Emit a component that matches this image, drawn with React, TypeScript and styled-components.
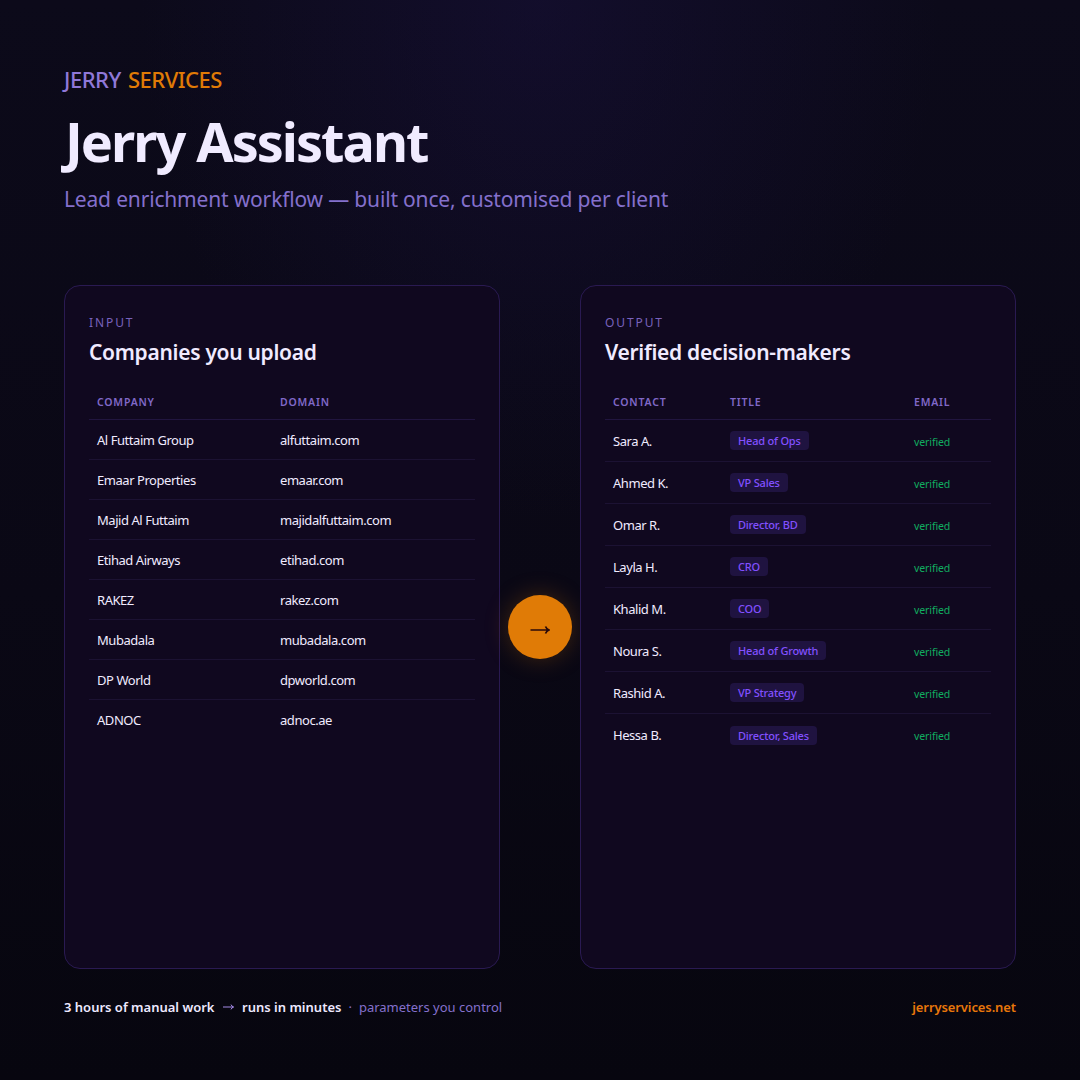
import styled, { createGlobalStyle } from 'styled-components';

const GlobalStyle = createGlobalStyle`
  html, body {
    margin: 0;
    padding: 0;
    background: #07060f;
  }
`;

const Page = styled.main`
  width: 1080px;
  height: 1080px;
  box-sizing: border-box;
  padding: 63px 64px 0;
  display: flex;
  flex-direction: column;
  font-family: "Noto Sans", "Open Sans", sans-serif;
  background:
    radial-gradient(ellipse 400px 520px at 540px 0, rgba(34, 22, 84, 0.3), transparent 100%),
    linear-gradient(180deg, #0c0a1a 0%, #0a0815 55%, #07060f 100%);
  overflow: hidden;
`;

const Brand = styled.div`
  font-size: 22px;
  line-height: 32px;
  font-weight: 500;
  letter-spacing: -0.5px;
  word-spacing: 2px;
  color: #8f78d8;

  span {
    color: #e07b06;
  }
`;

const Title = styled.h1`
  margin: 11px 0 0 1px;
  font-size: 54px;
  line-height: 70px;
  font-weight: 700;
  letter-spacing: -2px;
  color: #f0ebff;
`;

const Subtitle = styled.p`
  margin: 8px 0 0;
  font-size: 21px;
  line-height: 30px;
  letter-spacing: -0.17px;
  color: #8470cc;
`;

const Columns = styled.div`
  display: grid;
  grid-template-columns: 436px 80px 436px;
  height: 684px;
  margin-top: 71px;
`;

const Panel = styled.section`
  box-sizing: border-box;
  padding: 28px 24px 0;
  border: 1px solid #2a1a52;
  border-radius: 16px;
  background: #10081f;
`;

const PanelLabel = styled.div`
  font-size: 12px;
  line-height: 18px;
  letter-spacing: 1.9px;
  color: #7862bc;
`;

const PanelTitle = styled.h2`
  margin: 4px 0 0;
  font-size: 21px;
  line-height: 32px;
  font-weight: 600;
  letter-spacing: -0.3px;
  color: #f0ebff;
`;

const Table = styled.div<{ $columns: string }>`
  margin-top: 16px;
  display: grid;
  grid-template-columns: ${p => p.$columns};
`;

const Row = styled.div<{ $height: number }>`
  box-sizing: border-box;
  display: grid;
  grid-column: 1 / -1;
  grid-template-columns: subgrid;
  align-items: center;
  height: ${p => p.$height}px;
  border-bottom: 1px solid #1c1233;

  &:last-child {
    border-bottom: none;
  }
`;

const HeaderRow = styled(Row)`
  border-bottom-color: #21153f;
`;

const HeaderCell = styled.div`
  padding-left: 8px;
  font-size: 10.5px;
  font-weight: 600;
  letter-spacing: 0.8px;
  color: #8068c8;
`;

const Cell = styled.div`
  padding-left: 8px;
  font-size: 13px;
  letter-spacing: -0.45px;
  color: #f0ebff;
`;

const BadgeCell = styled.div`
  display: flex;
  padding-left: 8px;
`;

const Badge = styled.span`
  padding: 0 8px;
  height: 19px;
  line-height: 19px;
  border-radius: 4px;
  background: #1f1340;
  font-size: 11px;
  font-weight: 500;
  letter-spacing: -0.2px;
  color: #8250ff;
`;

const Verified = styled.span`
  font-size: 10.5px;
  letter-spacing: -0.1px;
  color: #10ad60;
`;

const Middle = styled.div`
  display: flex;
  align-items: center;
  justify-content: center;
`;

const ArrowCircle = styled.div`
  width: 64px;
  height: 64px;
  border-radius: 50%;
  display: flex;
  align-items: center;
  justify-content: center;
  background: #e07b06;
  box-shadow: 0 0 24px rgba(224, 123, 6, 0.25);
`;

const CircleArrow = styled.svg`
  margin-top: 6px;
`;

const Footer = styled.footer`
  margin-top: 28px;
  display: flex;
  align-items: center;
  justify-content: space-between;
  font-size: 13px;
  line-height: 20px;
`;

const FooterText = styled.div`
  display: flex;
  align-items: center;
  color: #8470cc;
`;

const Strong = styled.span`
  font-weight: 600;
  color: #eee9ff;
`;

const FooterArrow = styled.svg`
  margin: 0 8px 0 8.5px;
`;

const Dot = styled.span`
  margin: 0 7px;
`;

const Site = styled.div`
  font-weight: 600;
  letter-spacing: -0.1px;
  color: #e8770a;
`;

const companies = [
  ['Al Futtaim Group', 'alfuttaim.com'],
  ['Emaar Properties', 'emaar.com'],
  ['Majid Al Futtaim', 'majidalfuttaim.com'],
  ['Etihad Airways', 'etihad.com'],
  ['RAKEZ', 'rakez.com'],
  ['Mubadala', 'mubadala.com'],
  ['DP World', 'dpworld.com'],
  ['ADNOC', 'adnoc.ae'],
];

const contacts = [
  ['Sara A.', 'Head of Ops'],
  ['Ahmed K.', 'VP Sales'],
  ['Omar R.', 'Director, BD'],
  ['Layla H.', 'CRO'],
  ['Khalid M.', 'COO'],
  ['Noura S.', 'Head of Growth'],
  ['Rashid A.', 'VP Strategy'],
  ['Hessa B.', 'Director, Sales'],
];

export default function App() {
  return (
    <Page>
      <GlobalStyle />
      <Brand>JERRY <span>SERVICES</span></Brand>
      <Title>Jerry Assistant</Title>
      <Subtitle>Lead enrichment workflow — built once, customised per client</Subtitle>

      <Columns>
        <Panel>
          <PanelLabel>INPUT</PanelLabel>
          <PanelTitle>Companies you upload</PanelTitle>
          <Table $columns="183px 1fr">
            <HeaderRow $height={36}>
              <HeaderCell>COMPANY</HeaderCell>
              <HeaderCell>DOMAIN</HeaderCell>
            </HeaderRow>
            {companies.map(([name, domain]) => (
              <Row $height={40} key={name}>
                <Cell>{name}</Cell>
                <Cell>{domain}</Cell>
              </Row>
            ))}
          </Table>
        </Panel>

        <Middle>
          <ArrowCircle>
            <CircleArrow width="20" height="12" viewBox="0 0 20 12" aria-hidden>
              <path d="M0.5 6H19M15.5 2.5c.6 1.6 1.8 2.9 3.5 3.5-1.7.6-2.9 1.9-3.5 3.5" stroke="#2a0a0a" strokeWidth="1.7" fill="none" />
            </CircleArrow>
          </ArrowCircle>
        </Middle>

        <Panel>
          <PanelLabel>OUTPUT</PanelLabel>
          <PanelTitle>Verified decision-makers</PanelTitle>
          <Table $columns="117px 184px 1fr">
            <HeaderRow $height={36}>
              <HeaderCell>CONTACT</HeaderCell>
              <HeaderCell>TITLE</HeaderCell>
              <HeaderCell>EMAIL</HeaderCell>
            </HeaderRow>
            {contacts.map(([name, title]) => (
              <Row $height={42} key={name}>
                <Cell>{name}</Cell>
                <BadgeCell><Badge>{title}</Badge></BadgeCell>
                <Cell><Verified>verified</Verified></Cell>
              </Row>
            ))}
          </Table>
        </Panel>
      </Columns>

      <Footer>
        <FooterText>
          <Strong>3 hours of manual work</Strong>
          <FooterArrow width="11" height="8" viewBox="0 0 11 8" aria-hidden>
            <path d="M0 4H10.5M8 1.6c.4 1 1.2 2 2.5 2.4-1.3.4-2.1 1.4-2.5 2.4" stroke="#a48ae6" strokeWidth="1" fill="none" />
          </FooterArrow>
          <Strong>runs in minutes</Strong>
          <Dot>·</Dot>
          <span>parameters you control</span>
        </FooterText>
        <Site>jerryservices.net</Site>
      </Footer>
    </Page>
  );
}
